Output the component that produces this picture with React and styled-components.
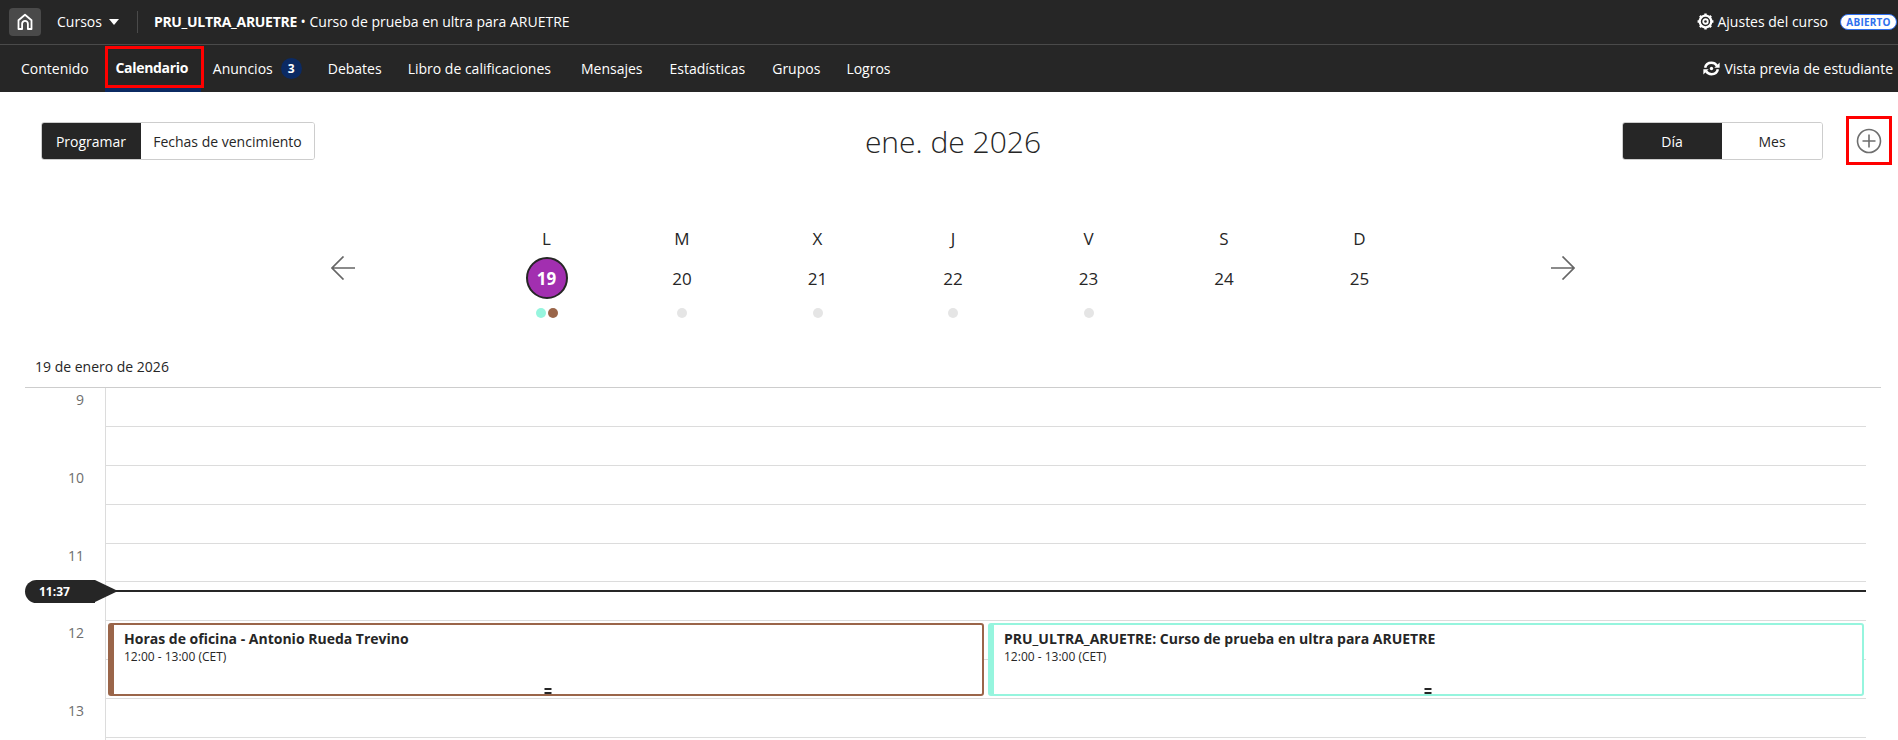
import React from "react";
import styled, { createGlobalStyle } from "styled-components";

const GlobalStyle = createGlobalStyle`
  html, body {
    margin: 0;
    height: 100%;
    overflow: hidden;
    background: #fff;
    font-family: "Open Sans", "Liberation Sans", sans-serif;
    color: #262626;
  }
  * { box-sizing: border-box; }
`;

const navItems = [
  { label: "Contenido" },
  { label: "Calendario", active: true },
  { label: "Anuncios", badge: 3 },
  { label: "Debates" },
  { label: "Libro de calificaciones", extra: 4 },
  { label: "Mensajes", extra: 1 },
  { label: "Estadísticas", extra: 1 },
  { label: "Grupos" },
  { label: "Logros" },
];

const days = [
  { letter: "L", num: 19, today: true, dots: ["#96f5de", "#9a6549"] },
  { letter: "M", num: 20, dots: ["#e5e5e5"] },
  { letter: "X", num: 21, dots: ["#e5e5e5"] },
  { letter: "J", num: 22, dots: ["#e5e5e5"] },
  { letter: "V", num: 23, dots: ["#e5e5e5"] },
  { letter: "S", num: 24, dots: [] },
  { letter: "D", num: 25, dots: [] },
];

const hours = [9, 10, 11, 12, 13];

const HomeIcon = () => (
  <svg width="18" height="18" viewBox="0 0 18 18" fill="none" stroke="#fff" strokeWidth="1.8" strokeLinejoin="round">
    <path d="M2.5 16V7.2L9 1.8l6.5 5.4V16h-3.6v-5.2a2.9 2.9 0 0 0-5.8 0V16z" />
  </svg>
);

const GearIcon = () => (
  <svg width="17" height="17" viewBox="0 0 24 24" fill="none" stroke="#fff" strokeWidth="3.2">
    <circle cx="12" cy="12" r="3.2" strokeWidth="2.6" />
    <circle cx="12" cy="12" r="8.2" />
    <path strokeWidth="3.4" d="M12 .8v3M12 20.2v3M.8 12h3M20.2 12h3M4.1 4.1l2.1 2.1M17.8 17.8l2.1 2.1M4.1 19.9l2.1-2.1M17.8 6.2l2.1-2.1" />
  </svg>
);

const RefreshIcon = () => (
  <svg width="17" height="15" viewBox="0 0 24 21" fill="none" stroke="#fff" strokeWidth="3.6">
    <path d="M3 9.5C4 5 7.5 2.5 12 2.5c3.4 0 5.8 1.4 7.6 4" />
    <path d="M21 11.5c-1 4.5-4.5 7-9 7-3.4 0-5.8-1.4-7.6-4" />
    <path fill="#fff" stroke="none" d="M23.5 2v7.5H16zM.5 19v-7.5H8z" />
    <circle cx="12" cy="10.5" r="2.4" fill="#fff" stroke="none" />
  </svg>
);

const PlusCircleIcon = () => (
  <svg width="26" height="26" viewBox="0 0 26 26" fill="none" stroke="#6e6e6e" strokeWidth="1.6">
    <circle cx="13" cy="13" r="11.5" />
    <path d="M13 6.5v13M6.5 13h13" />
  </svg>
);

const ArrowIcon = ({ flip }) => (
  <svg width="24" height="24" viewBox="0 0 24 24" fill="none" stroke="#666" strokeWidth="1.7">
    <path d={flip ? "M0 12h23M11.5 .5 23 12 11.5 23.5" : "M24 12H1M12.5 .5 1 12l11.5 11.5"} />
  </svg>
);

export default function App() {
  return (
    <Page>
      <GlobalStyle />
      <TopBar>
        <HomeButton><HomeIcon /></HomeButton>
        <CoursesMenu>Cursos <Caret /></CoursesMenu>
        <TopDivider />
        <CourseTitle><strong>PRU_ULTRA_ARUETRE</strong> • Curso de prueba en ultra para ARUETRE</CourseTitle>
        <TopRight>
          <SettingsLink><GearIcon />Ajustes del curso</SettingsLink>
          <StatusPill>ABIERTO</StatusPill>
        </TopRight>
      </TopBar>

      <NavBar>
        {navItems.map((item) => (
          <NavTab key={item.label} $active={item.active} $extra={item.extra}>
            {item.label}
            {item.badge && <NavBadge>{item.badge}</NavBadge>}
          </NavTab>
        ))}
        <PreviewLink><RefreshIcon />Vista previa de estudiante</PreviewLink>
      </NavBar>

      <Toolbar>
        <Segmented $inset>
          <SegmentButton $on $width={100}>Programar</SegmentButton>
          <SegmentButton $width={173}>Fechas de vencimiento</SegmentButton>
        </Segmented>
        <MonthTitle>ene. de 2026</MonthTitle>
        <ToolbarRight>
          <Segmented>
            <SegmentButton $on $width={100}>Día</SegmentButton>
            <SegmentButton $width={100}>Mes</SegmentButton>
          </Segmented>
          <AddButton><PlusCircleIcon /></AddButton>
        </ToolbarRight>
      </Toolbar>

      <WeekStrip>
        <ArrowButton><ArrowIcon /></ArrowButton>
        <WeekDays>
          {days.map((d) => (
            <DayColumn key={d.letter}>
              <DayLetter>{d.letter}</DayLetter>
              <DayNumber $today={d.today}>{d.num}</DayNumber>
              <DotRow>
                {d.dots.map((c) => <Dot key={c} $color={c} />)}
              </DotRow>
            </DayColumn>
          ))}
        </WeekDays>
        <ArrowButton><ArrowIcon flip /></ArrowButton>
      </WeekStrip>

      <DateLabel>19 de enero de 2026</DateLabel>

      <Schedule>
        {hours.map((h) => (
          <HourRow key={h}>
            <HourLabel>{h}</HourLabel>
            <HourSlots>
              <HalfSlot />
              <HalfSlot />
              {h === 12 && (
                <EventLayer>
                  <EventCard $color="#9a6549">
                    <EventTitle>Horas de oficina - Antonio Rueda Trevino</EventTitle>
                    <EventTime>12:00 - 13:00 (CET)</EventTime>
                    <Grip />
                  </EventCard>
                  <EventCard $color="#96f5de">
                    <EventTitle>PRU_ULTRA_ARUETRE: Curso de prueba en ultra para ARUETRE</EventTitle>
                    <EventTime>12:00 - 13:00 (CET)</EventTime>
                    <Grip />
                  </EventCard>
                </EventLayer>
              )}
            </HourSlots>
            {h === 11 && (
              <NowMarker>
                <NowPill>11:37</NowPill>
                <NowLine />
              </NowMarker>
            )}
          </HourRow>
        ))}
      </Schedule>
    </Page>
  );
}

const Page = styled.div`
  width: 1898px;
  height: 740px;
  overflow: hidden;
`;

const TopBar = styled.header`
  height: 45px;
  background: #262626;
  border-bottom: 1px solid #4a4a4a;
  color: #fff;
  display: flex;
  align-items: center;
  padding: 0 1px 1px 9px;
  font-size: 14px;
`;

const HomeButton = styled.div`
  width: 32px;
  height: 28px;
  border-radius: 4px;
  background: #4a4a4a;
  display: flex;
  align-items: center;
  justify-content: center;
`;

const CoursesMenu = styled.div`
  margin-left: 16px;
  display: flex;
  align-items: center;
  gap: 7px;
`;

const Caret = styled.span`
  width: 0;
  height: 0;
  border-left: 5px solid transparent;
  border-right: 5px solid transparent;
  border-top: 6px solid #fff;
`;

const TopDivider = styled.span`
  width: 1px;
  height: 22px;
  background: #4a4a4a;
  margin-left: 18px;
`;

const CourseTitle = styled.div`
  margin-left: 16px;
  strong {
    font-weight: 700;
    letter-spacing: -0.3px;
  }
`;

const TopRight = styled.div`
  margin-left: auto;
  display: flex;
  align-items: center;
  gap: 12px;
`;

const SettingsLink = styled.div`
  display: flex;
  align-items: center;
  gap: 3px;
  font-size: 14px;
`;

const StatusPill = styled.span`
  width: 57px;
  height: 16px;
  border-radius: 8px;
  background: #fff;
  border: 1.5px solid #2f6fed;
  color: #2f6fed;
  font-size: 10px;
  font-weight: 700;
  letter-spacing: 0.2px;
  display: flex;
  align-items: center;
  justify-content: center;
`;

const NavBar = styled.nav`
  height: 47px;
  background: #262626;
  color: #fff;
  display: flex;
  align-items: flex-start;
  padding: 0 5px 0 9px;
  font-size: 14px;
`;

const NavTab = styled.div`
  height: 46px;
  display: flex;
  align-items: center;
  padding: 0 12px;
  margin-right: ${(p) => 2 + (p.$extra || 0)}px;
  position: relative;
  ${(p) => p.$active && `
    font-weight: 700;
    letter-spacing: -0.3px;
    outline: 3px solid #f00;
    outline-offset: -3px;
    height: 42px;
    margin: 1px -3px 0 2px;
    width: 99px;
    padding: 0 5px 0 0;
    justify-content: center;
    &::after {
      content: "";
      position: absolute;
      left: 0;
      right: 3px;
      top: 42px;
      height: 4px;
      background: #0b2a63;
    }
  `}
`;

const NavBadge = styled.span`
  width: 21px;
  height: 21px;
  border-radius: 50%;
  background: #0b2a63;
  font-size: 12px;
  font-weight: 700;
  margin-left: 8px;
  display: flex;
  align-items: center;
  justify-content: center;
`;

const PreviewLink = styled.div`
  margin-left: auto;
  height: 46px;
  display: flex;
  align-items: center;
  gap: 4px;
  font-size: 14px;
`;

const Toolbar = styled.div`
  height: 113px;
  padding: 24px 6px 0;
  display: grid;
  grid-template-columns: 1fr auto 1fr;
  align-items: flex-start;
`;

const Segmented = styled.div`
  display: inline-flex;
  margin: 6px 0 0 ${(p) => (p.$inset ? "35px" : "0")};
  height: 38px;
  border: 1px solid #cdcdcd;
  border-radius: 3px;
  overflow: hidden;
  justify-self: start;
`;

const SegmentButton = styled.div`
  width: ${(p) => p.$width}px;
  margin: ${(p) => (p.$on ? "-1px 0 -1px -1px" : "0")};
  background: ${(p) => (p.$on ? "#262626" : "#fff")};
  color: ${(p) => (p.$on ? "#fff" : "#262626")};
  font-size: 14px;
  display: flex;
  align-items: center;
  justify-content: center;
`;

const MonthTitle = styled.h1`
  margin: 7px 0 0 8px;
  font-size: 30px;
  line-height: 38px;
  font-weight: 300;
  color: #262626;
`;

const ToolbarRight = styled.div`
  display: flex;
  justify-content: flex-end;
  gap: 23px;
`;

const AddButton = styled.div`
  width: 46px;
  height: 49px;
  border: 3px solid #f00;
  display: flex;
  align-items: center;
  justify-content: center;
`;

const WeekStrip = styled.div`
  height: 152px;
  padding: 22px 0 0 8px;
  display: flex;
  justify-content: center;
  align-items: flex-start;
  gap: 124px;
`;

const ArrowButton = styled.div`
  width: 24px;
  height: 24px;
  margin-top: 29px;
`;

const WeekDays = styled.div`
  display: grid;
  grid-template-columns: repeat(7, 135.5px);
`;

const DayColumn = styled.div`
  display: flex;
  flex-direction: column;
  align-items: center;
`;

const DayLetter = styled.div`
  font-size: 17px;
  line-height: 24px;
`;

const DayNumber = styled.div`
  width: 42px;
  height: 42px;
  margin-top: 6px;
  border-radius: 50%;
  font-size: 17px;
  display: flex;
  align-items: center;
  justify-content: center;
  ${(p) => p.$today && `
    background: #a22fb0;
    border: 2px solid #262626;
    color: #fff;
    font-weight: 700;
  `}
`;

const DotRow = styled.div`
  height: 10px;
  margin-top: 9px;
  display: flex;
  gap: 2px;
`;

const Dot = styled.span`
  width: 10px;
  height: 10px;
  border-radius: 50%;
  background: ${(p) => p.$color};
`;

const DateLabel = styled.div`
  height: 30px;
  padding-left: 35px;
  font-size: 14px;
  line-height: 19px;
`;

const Schedule = styled.section`
  margin: 0 17px 0 25px;
  border-top: 1px solid #cdcdcd;
`;

const HourRow = styled.div`
  position: relative;
  display: flex;
  height: 77.75px;
  padding-right: 15px;
`;

const HourLabel = styled.div`
  width: 81px;
  padding: 2px 21px 0 0;
  text-align: right;
  font-size: 14px;
  line-height: 19px;
  color: #6e6e6e;
  border-right: 1px solid #dcdcdc;
  flex: none;
`;

const HourSlots = styled.div`
  position: relative;
  flex: 1;
`;

const HalfSlot = styled.div`
  height: 38.875px;
  border-bottom: 1px solid #dcdcdc;
`;

const EventLayer = styled.div`
  position: absolute;
  inset: 2px 2px 3px 2px;
  display: flex;
  gap: 4px;
`;

const EventCard = styled.div`
  flex: 1;
  position: relative;
  background: #fff;
  border: 2px solid ${(p) => p.$color};
  border-left-width: 6px;
  border-radius: 3px;
  padding: 4px 0 0 10px;
`;

const EventTitle = styled.div`
  font-size: 14px;
  line-height: 19px;
  font-weight: 700;
`;

const EventTime = styled.div`
  font-size: 12px;
  line-height: 17px;
`;

const Grip = styled.span`
  position: absolute;
  left: 50%;
  bottom: 0;
  width: 7px;
  height: 6px;
  transform: translateX(-50%);
  border-top: 2px solid #262626;
  border-bottom: 2px solid #262626;
`;

const NowMarker = styled.div`
  position: absolute;
  left: 0;
  right: 15px;
  top: 36px;
  height: 23px;
  display: flex;
  align-items: center;
`;

const NowPill = styled.div`
  width: 70px;
  height: 23px;
  background: #262626;
  border-radius: 12px 0 0 12px;
  color: #fff;
  font-size: 12px;
  font-weight: 700;
  padding-left: 14px;
  display: flex;
  align-items: center;
  position: relative;
  flex: none;
  &::after {
    content: "";
    position: absolute;
    left: 70px;
    top: 0;
    border-left: 23px solid #262626;
    border-top: 11.5px solid transparent;
    border-bottom: 11.5px solid transparent;
  }
`;

const NowLine = styled.div`
  flex: 1;
  height: 2px;
  background: #262626;
`;
